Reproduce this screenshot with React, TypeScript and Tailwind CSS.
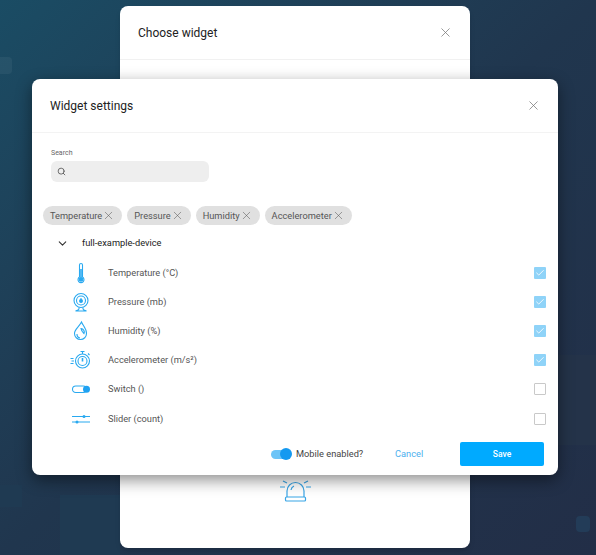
import { X, Search, ChevronDown, Check } from "lucide-react";

const sensors = [
  { label: "Temperature (°C)", icon: "temp", checked: true },
  { label: "Pressure (mb)", icon: "pressure", checked: true },
  { label: "Humidity (%)", icon: "humidity", checked: true },
  { label: "Accelerometer (m/s²)", icon: "accel", checked: true },
  { label: "Switch ()", icon: "switch", checked: false },
  { label: "Slider (count)", icon: "slider", checked: false },
];

const chips = ["Temperature", "Pressure", "Humidity", "Accelerometer"];

function SensorIcon({ name }: { name: string }) {
  const common = { width: 24, height: 24, viewBox: "0 0 24 24", fill: "none", stroke: "#29a9f0", strokeWidth: 1.1 };
  if (name === "temp")
    return (
      <svg {...common}>
        <path d="M10.500 4a1.500 1.500 0 0 1 3 0v12a3 3 0 1 1-3 0z" />
        <path d="M12 8v9" strokeWidth={1.6} />
        <circle cx="12" cy="18.500" r="1.800" fill="#29a9f0" />
      </svg>
    );
  if (name === "pressure")
    return (
      <svg {...common}>
        <circle cx="12" cy="10.500" r="7" />
        <circle cx="12" cy="10.500" r="4.500" />
        <circle cx="12" cy="11" r="1.400" fill="#29a9f0" />
        <path d="M12 8v2" />
        <path d="M10 17.500v1.500c0 1-2 1.500-3.500 2h11c-1.500-.5-3.500-1-3.500-2v-1.500" />
      </svg>
    );
  if (name === "humidity")
    return (
      <svg {...common}>
        <path d="M12.500 3c1 3 5 6 5 11.500a6 6 0 0 1-12 0c0-4 4-6 7-11.500z" />
        <path d="M12 9.500a3.500 3.500 0 0 1 3 5c-1-1-2.500-2-3-5z" fill="#bfe6fb" />
        <path d="M8 15a4 4 0 0 0 3 4" />
      </svg>
    );
  if (name === "accel")
    return (
      <svg {...common}>
        <circle cx="13.500" cy="13" r="7" />
        <circle cx="13.500" cy="13" r="4.500" />
        <path d="M13.500 10v3.500" strokeWidth={1.6} />
        <path d="M11.500 3.500h4M13.500 3.500v2.500M19 5.500l1.500 1.500" />
        <path d="M1.500 10.500h3M2.500 13h2.500M1.500 15.500h3" />
      </svg>
    );
  if (name === "switch")
    return (
      <svg {...common}>
        <rect x="3.500" y="9" width="14" height="6.500" rx="3.250" />
        <circle cx="17.500" cy="12.250" r="3.500" fill="#1fa2f2" stroke="none" />
      </svg>
    );
  return (
    <svg {...common}>
      <path d="M3 9.500h18M3 15h18" />
      <circle cx="15" cy="9.500" r="1.500" fill="#29a9f0" stroke="none" />
      <circle cx="8" cy="15" r="1.500" fill="#29a9f0" stroke="none" />
    </svg>
  );
}

export default function App() {
  return (
    <div
      className="relative w-[596px] h-[555px] overflow-hidden bg-gradient-to-br from-[#1a4c64] via-[#20364e] to-[#222e47]"
      style={{ fontFamily: "Roboto, sans-serif" }}
    >
      {/* faint tiles in the dashboard behind */}
      <div className="absolute left-0 top-[57px] w-[12px] h-[17px] rounded-r bg-white/5" />
      <div className="absolute left-[60px] top-[495px] w-[60px] h-[60px] bg-[#1f3a52]" />
      <div className="absolute left-0 top-[485px] w-[22px] h-[22px] bg-[#1f3a52]" />
      <div className="absolute left-[576px] top-[516px] w-[14px] h-[16px] rounded-sm bg-[#233c58]" />
      <div className="absolute left-[558px] top-[355px] w-[38px] h-[90px] bg-[#243349]" />

      {/* Choose widget modal */}
      <div className="absolute left-[120px] top-[6px] w-[350px] h-[542px] rounded-lg bg-white shadow-md">
        <div className="flex items-center justify-between h-[54px] border-b border-[#f1f1f1] pl-[18px] pr-[17px]">
          <h2 className="text-[12px] leading-none text-[#222] pt-[1px]">Choose widget</h2>
          <X size={15} strokeWidth={1.2} color="#777" />
        </div>
        <div className="absolute left-[157px] top-[469px]">
          <svg width="37" height="28" viewBox="0 0 37 28" fill="none" stroke="#39a5e6" strokeWidth="1.2">
            <path d="M10 22v-6a8.500 8.500 0 0 1 17 0v6" />
            <path d="M14 15a5 5 0 0 1 3-4" />
            <rect x="8.500" y="22" width="20" height="4" rx="1" />
            <path d="M3 12h5M29 12h5M6 6l4 2M31 6l-4 2" />
          </svg>
        </div>
      </div>

      {/* Widget settings modal */}
      <div className="absolute left-[32px] top-[79px] w-[526px] h-[396px] rounded-lg bg-white shadow-[0_5px_16px_rgba(0,0,0,0.45)] flex flex-col">
        <div className="flex items-center justify-between h-[54px] shrink-0 border-b border-[#f3f3f3] pl-[18px] pr-[17px]">
          <h2 className="text-[12px] leading-none text-[#222] pt-[1px]">Widget settings</h2>
          <X size={15} strokeWidth={1.2} color="#777" />
        </div>

        <div className="pl-[19px] pt-[16px]">
          <div className="text-[7px] leading-[9px] text-[#666]">Search</div>
          <div className="mt-[3px] w-[158px] h-[21px] rounded-md bg-[#eeeeee] flex items-center pl-[6px]">
            <Search size={9} strokeWidth={2} color="#444" />
          </div>
        </div>

        <div className="flex gap-[5px] pl-[11px] mt-[24px]">
          {chips.map((chip) => (
            <div key={chip} className="flex items-center h-[19px] rounded-full bg-[#e0e0e0] pl-[7px] pr-[7px] text-[9.250px] text-[#555]">
              {chip}
              <X size={13} strokeWidth={1} color="#555" />
            </div>
          ))}
        </div>

        <div className="flex items-center pl-[24px] mt-[10px] h-[16px]">
          <ChevronDown size={13} strokeWidth={2} color="#333" />
          <span className="ml-[13px] text-[9.250px] text-[#222]">full-example-device</span>
        </div>

        <div className="mt-[7px] flex flex-col">
          {sensors.map((s) => (
            <div key={s.label} className="flex items-center h-[29.200px] pl-[37px] pr-[12px]">
              <SensorIcon name={s.icon} />
              <span className="ml-[15px] flex-1 text-[9.250px] text-[#555]">{s.label}</span>
              {s.checked ? (
                <span className="w-[12px] h-[12px] rounded-[1px] bg-[#8fd3f8] flex items-center justify-center">
                  <Check size={10} strokeWidth={2} color="#fff" />
                </span>
              ) : (
                <span className="w-[12px] h-[12px] rounded-[1px] border border-[#c9c9c9]" />
              )}
            </div>
          ))}
        </div>

        <div className="flex items-center mt-[9px] pl-[239px]">
          <div className="relative w-[20px] h-[9px] rounded-full bg-[#6cc4f7]">
            <div className="absolute right-[-1px] top-[-1.500px] w-[12px] h-[12px] rounded-full bg-[#1499f0]" />
          </div>
          <span className="ml-[5px] w-[68px] whitespace-nowrap text-[9.250px] text-[#444]">Mobile enabled?</span>
          <span className="ml-[31px] w-[29px] text-[9.250px] text-[#4cb0ee]">Cancel</span>
          <button className="ml-[36px] w-[84px] h-[24px] rounded-[2px] bg-[#00aaff] text-[8.500px] font-medium text-white">Save</button>
        </div>
      </div>
    </div>
  );
}
